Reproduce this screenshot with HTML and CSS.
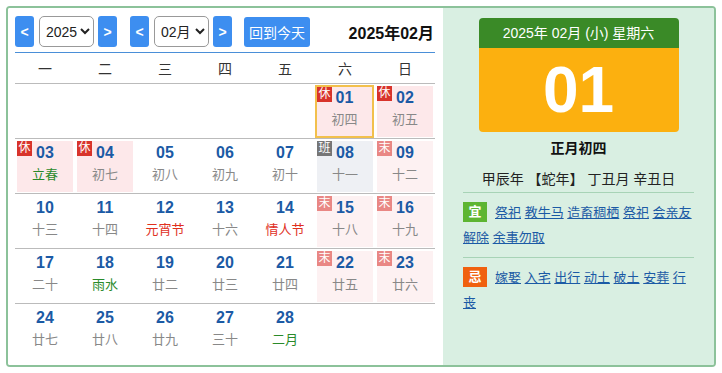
FILE: index.html
```html
<!DOCTYPE html>
<html lang="zh-CN">

<head>
    <meta charset="UTF-8">
    <meta name="viewport" content="width=device-width, initial-scale=1.0">
    <title>万年历</title>
    <link rel="stylesheet" href="styles.css">
</head>

<body>
    <div class="calendar">
        <div class="left-panel">
            <div class="toolbar">
                <button class="nav-btn">&lt;</button>
                <select class="picker year-picker">
                    <option>2025</option>
                </select>
                <button class="nav-btn">&gt;</button>
                <button class="nav-btn month-prev">&lt;</button>
                <select class="picker month-picker">
                    <option>02月</option>
                </select>
                <button class="nav-btn">&gt;</button>
                <button class="today-btn">回到今天</button>
                <div class="title">2025年02月</div>
            </div>

            <div class="weekdays">
                <div>一</div>
                <div>二</div>
                <div>三</div>
                <div>四</div>
                <div>五</div>
                <div>六</div>
                <div>日</div>
            </div>

            <div class="week">
                <div class="day empty"></div>
                <div class="day empty"></div>
                <div class="day empty"></div>
                <div class="day empty"></div>
                <div class="day empty"></div>
                <div class="day holiday today"><span class="tag rest">休</span><div class="num">01</div><div class="lunar">初四</div></div>
                <div class="day holiday"><span class="tag rest">休</span><div class="num">02</div><div class="lunar">初五</div></div>
            </div>

            <div class="week">
                <div class="day holiday"><span class="tag rest">休</span><div class="num">03</div><div class="lunar term">立春</div></div>
                <div class="day holiday"><span class="tag rest">休</span><div class="num">04</div><div class="lunar">初七</div></div>
                <div class="day"><div class="num">05</div><div class="lunar">初八</div></div>
                <div class="day"><div class="num">06</div><div class="lunar">初九</div></div>
                <div class="day"><div class="num">07</div><div class="lunar">初十</div></div>
                <div class="day workday"><span class="tag work">班</span><div class="num">08</div><div class="lunar">十一</div></div>
                <div class="day weekend"><span class="tag end">末</span><div class="num">09</div><div class="lunar">十二</div></div>
            </div>

            <div class="week">
                <div class="day"><div class="num">10</div><div class="lunar">十三</div></div>
                <div class="day"><div class="num">11</div><div class="lunar">十四</div></div>
                <div class="day"><div class="num">12</div><div class="lunar festival">元宵节</div></div>
                <div class="day"><div class="num">13</div><div class="lunar">十六</div></div>
                <div class="day"><div class="num">14</div><div class="lunar festival">情人节</div></div>
                <div class="day weekend"><span class="tag end">末</span><div class="num">15</div><div class="lunar">十八</div></div>
                <div class="day weekend"><span class="tag end">末</span><div class="num">16</div><div class="lunar">十九</div></div>
            </div>

            <div class="week">
                <div class="day"><div class="num">17</div><div class="lunar">二十</div></div>
                <div class="day"><div class="num">18</div><div class="lunar term">雨水</div></div>
                <div class="day"><div class="num">19</div><div class="lunar">廿二</div></div>
                <div class="day"><div class="num">20</div><div class="lunar">廿三</div></div>
                <div class="day"><div class="num">21</div><div class="lunar">廿四</div></div>
                <div class="day weekend"><span class="tag end">末</span><div class="num">22</div><div class="lunar">廿五</div></div>
                <div class="day weekend"><span class="tag end">末</span><div class="num">23</div><div class="lunar">廿六</div></div>
            </div>

            <div class="week last">
                <div class="day"><div class="num">24</div><div class="lunar">廿七</div></div>
                <div class="day"><div class="num">25</div><div class="lunar">廿八</div></div>
                <div class="day"><div class="num">26</div><div class="lunar">廿九</div></div>
                <div class="day"><div class="num">27</div><div class="lunar">三十</div></div>
                <div class="day"><div class="num">28</div><div class="lunar term">二月</div></div>
                <div class="day empty"></div>
                <div class="day empty"></div>
            </div>
        </div>

        <div class="right-panel">
            <div class="date-card">
                <div class="card-head">2025年 02月 (小) 星期六</div>
                <div class="card-day">01</div>
            </div>
            <div class="lunar-date">正月初四</div>
            <div class="ganzhi">甲辰年 【蛇年】 丁丑月 辛丑日</div>

            <div class="almanac">
                <span class="mark yi">宜</span><a href="#">祭祀</a> <a href="#">教牛马</a> <a href="#">造畜稠栖</a> <a href="#">祭祀</a> <a href="#">会亲友</a> <a href="#">解除</a> <a href="#">余事勿取</a>
            </div>
            <div class="almanac">
                <span class="mark ji">忌</span><a href="#">嫁娶</a> <a href="#">入宅</a> <a href="#">出行</a> <a href="#">动土</a> <a href="#">破土</a> <a href="#">安葬</a> <a href="#">行丧</a>
            </div>
        </div>
    </div>
</body>

</html>
```

FILE: styles.css
```css
body {
    margin: 0;
    font-family: "Liberation Sans", "Noto Sans CJK SC", sans-serif;
    background-color: #ffffff;
}

.calendar {
    display: flex;
    width: 706px;
    height: 357px;
    margin: 6px;
    border: 2px solid #8cc29a;
    border-radius: 4px;
    overflow: hidden;
}

.left-panel {
    width: 420px;
    padding: 8px 8px 0 7px;
    background-color: #ffffff;
}

.toolbar {
    display: flex;
    align-items: center;
    height: 31px;
    padding-bottom: 5px;
    border-bottom: 1px solid #4a8fd8;
}

.nav-btn {
    box-sizing: border-box;
    width: 19px;
    height: 31px;
    margin: 0;
    padding: 0;
    border: none;
    border-radius: 3px;
    background-color: #3d8ef0;
    color: #ffffff;
    font-family: "Liberation Sans", sans-serif;
    font-size: 14px;
    font-weight: bold;
}

.picker {
    box-sizing: border-box;
    width: 55px;
    height: 31px;
    margin: 0 4px 0 5px;
    padding: 0 0 0 2px;
    border: 1px solid #999999;
    border-radius: 5px;
    background-color: #ffffff;
    font-family: "Liberation Sans", "Noto Sans CJK SC", sans-serif;
    font-size: 14px;
    color: #222222;
}

.month-prev {
    margin-left: 13px;
}

.today-btn {
    box-sizing: border-box;
    width: 66px;
    height: 30px;
    margin: 0 0 0 12px;
    padding: 0;
    border: none;
    border-radius: 3px;
    background-color: #3d8ef0;
    color: #ffffff;
    font-family: "Liberation Sans", "Noto Sans CJK SC", sans-serif;
    font-size: 14px;
}

.title {
    margin-left: auto;
    margin-right: 1px;
    font-size: 16px;
    font-weight: bold;
    color: #111111;
}

.weekdays {
    display: grid;
    grid-template-columns: repeat(7, 60px);
    height: 30px;
    align-items: center;
    border-bottom: 1px solid #bbbbbb;
    font-size: 14px;
    color: #333333;
    text-align: center;
}

.week {
    display: grid;
    grid-template-columns: repeat(7, 60px);
    height: 54px;
    border-bottom: 1px solid #bbbbbb;
}

.week.last {
    border-bottom: none;
}

.day {
    position: relative;
    margin: 2px 2px 1px 2px;
    padding-top: 2px;
    text-align: center;
}

.day.holiday {
    background-color: #fde8ea;
}

.day.weekend {
    background-color: #fdf1f2;
}

.day.workday {
    background-color: #eef0f4;
}

.day.today {
    margin: 1px 1px 0 0;
    padding-top: 1px;
    border: 2px solid #f2c04c;
}

.num {
    font-size: 16px;
    font-weight: bold;
    line-height: 20px;
    color: #1b5aa5;
}

.lunar {
    margin-top: 2px;
    font-size: 13px;
    line-height: 20px;
    color: #888888;
}

.lunar.term {
    color: #2a8a2a;
}

.lunar.festival {
    color: #e0301e;
}

.tag {
    position: absolute;
    top: 0;
    left: 0;
    width: 15px;
    height: 15px;
    font-size: 12px;
    line-height: 15px;
    color: #ffffff;
    text-align: center;
}

.tag.rest {
    background-color: #d8332b;
}

.tag.end {
    background-color: #e98784;
}

.tag.work {
    background-color: #767676;
}

.right-panel {
    flex: 1;
    padding: 10px 20px 0 20px;
    background-color: #d9efe2;
}

.date-card {
    width: 200px;
    margin: 0 auto;
    border-radius: 4px;
    overflow: hidden;
}

.card-head {
    height: 30px;
    line-height: 30px;
    background-color: #3a8a27;
    color: #ffffff;
    font-size: 14px;
    text-align: center;
}

.card-day {
    height: 84px;
    line-height: 84px;
    background-color: #fcb00f;
    color: #ffffff;
    font-size: 64px;
    font-weight: bold;
    text-align: center;
}

.lunar-date {
    margin-top: 6px;
    font-size: 14px;
    font-weight: bold;
    line-height: 20px;
    color: #111111;
    text-align: center;
}

.ganzhi {
    margin-top: 11px;
    padding-bottom: 3px;
    font-size: 14px;
    line-height: 20px;
    color: #222222;
    text-align: center;
}

.almanac {
    padding: 7px 0;
    border-top: 1px solid #a7d3b6;
    font-size: 13px;
    line-height: 25px;
}

.almanac a {
    color: #1b5aa5;
}

.mark {
    display: inline-block;
    width: 24px;
    height: 20px;
    margin-right: 8px;
    line-height: 20px;
    color: #ffffff;
    font-weight: bold;
    text-align: center;
    vertical-align: 1px;
}

.mark.yi {
    background-color: #5db532;
}

.mark.ji {
    background-color: #f0610f;
}
```
